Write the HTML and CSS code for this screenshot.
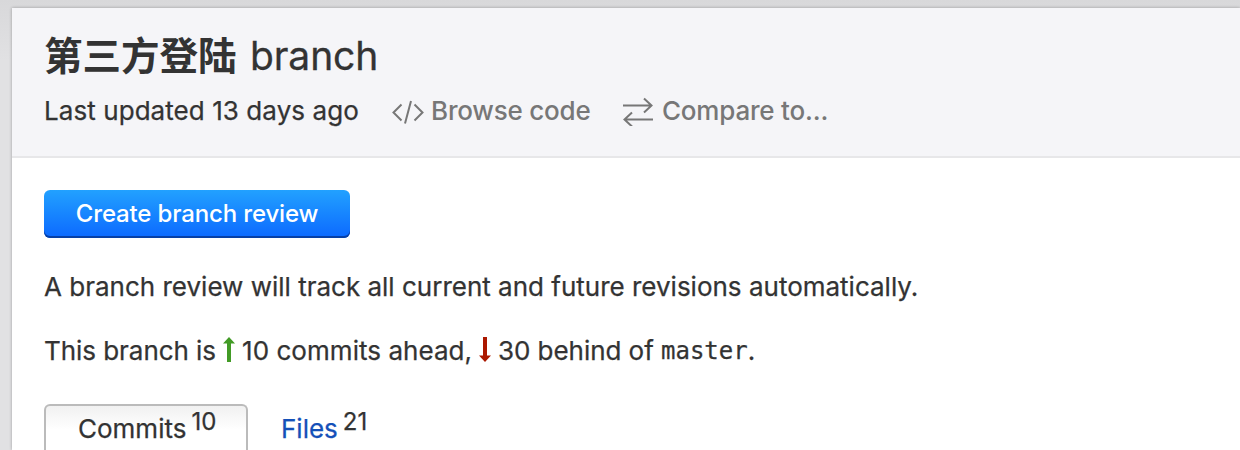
FILE: index.html
```html
<!DOCTYPE html>
<html lang="en">
<head>
<meta charset="utf-8">
<title>Branch</title>
<link rel="stylesheet" href="styles.css">
</head>
<body>
<main class="sheet">
  <header class="header">
    <h1 class="title"><span class="title-name">第三方登陆</span> <span class="title-kind">branch</span></h1>
    <div class="meta">
      <span class="updated">Last updated 13 days ago</span>
      <a class="action browse"><svg class="icon" width="32" height="26" viewBox="0 0 32 26"><path d="M9.500 6.500 1.500 14.500l8 8M22.500 6.500l8 8-8 8M19 3 13 25.500"/></svg><span>Browse code</span></a>
      <a class="action compare"><svg class="icon" width="32" height="30" viewBox="0 0 32 30"><path d="M0 9.500h28M21 2.500l7.500 7-7.500 7M30 23.500h-28M9 16.500l-7.500 7 7.500 7"/></svg><span>Compare to...</span></a>
    </div>
  </header>
  <section class="content">
    <button class="review">Create branch review</button>
    <p class="text intro">A branch review will track all current and future revisions automatically.</p>
    <p class="text status"><span class="s1">This branch is</span><svg class="arrow up" width="12" height="26" viewBox="0 0 12 26"><path d="M6 0l6 6.500H8V25H4V6.500H0z"/></svg><span class="s2">10 commits ahead,</span><svg class="arrow down" width="12" height="26" viewBox="0 0 12 26"><path d="M6 25l6-6.500H8V0H4v18.500H0z"/></svg><span class="s3">30 behind of</span><code>master</code><span>.</span></p>
    <nav class="tabs">
      <a class="tab active"><span class="label">Commits</span><span class="count">10</span></a>
      <a class="tab"><span class="label">Files</span><span class="count">21</span></a>
    </nav>
  </section>
</main>
</body>
</html>
```
FILE: styles.css
```css
* { box-sizing: border-box; }
body {
  margin: 0;
  height: 450px;
  overflow: hidden;
  padding: 8px 0 0 12px;
  background: linear-gradient(#d8d8da, #e1e1e3 60px);
  font: 26px/32px Inter, "Noto Sans CJK SC", sans-serif;
  color: #333;
}
.sheet {
  height: 442px;
  background: #fff;
  box-shadow: 0 0 3px rgba(0, 0, 0, .3);
}
.header {
  height: 150px;
  padding: 24px 0 0 32px;
  background: #f5f5f8;
  border-bottom: 2px solid #e7e7e9;
}
.title {
  display: flex;
  margin: 0;
  height: 48px;
  font-size: 39px;
  line-height: 48px;
  font-weight: 400;
}
.title-name {
  width: 206px;
  font-family: "Noto Sans CJK SC", sans-serif;
  font-size: 38.5px;
  font-weight: 700;
  line-height: 43px;
}
.title-kind { letter-spacing: -.1px; -webkit-text-stroke: .3px #333; }
.meta { display: flex; margin-top: 15px; height: 32px; align-items: center; white-space: nowrap; }
.updated { width: 348px; letter-spacing: .07px; }
.updated, .text, .tab { -webkit-text-stroke: .25px; }
.action { display: flex; align-items: center; color: #777; font-weight: 500; letter-spacing: -.2px; }
.browse { width: 231px; }
.action span { margin-left: 7px; }
.icon { fill: none; stroke: #777; stroke-width: 2; }
.content { padding: 32px 0 0 32px; }
.review {
  display: block;
  width: 306px;
  height: 48px;
  padding: 0;
  border: 0;
  border-radius: 6px;
  background: linear-gradient(#22a1ff, #0c69ff);
  box-shadow: inset 0 -2px #0740a6;
  color: #fff;
  font: 500 24px/46px Inter, sans-serif;
  letter-spacing: -.15px;
  white-space: nowrap;
}
.text { margin: 32px 0 0; height: 32px; white-space: nowrap; }
.intro { padding-top: 1px; }
.status { display: flex; align-items: center; }
.status span, code { padding-top: 2px; }
.s1 { width: 179px; letter-spacing: -.05px; }
.s2 { width: 237px; margin-left: 7px; letter-spacing: .05px; }
.s3 { width: 163px; margin-left: 7px; letter-spacing: -.05px; }
.up { fill: #429b26; }
.down { fill: #ab1800; }
code { font: 24px/32px "DejaVu Sans Mono", monospace; letter-spacing: 0; }
.tabs { display: flex; margin-top: 38px; height: 46px; }
.tab { display: flex; height: 46px; padding: 9px 0 0 33px; color: #1450b8; }
.active {
  width: 204px;
  padding: 7px 0 0 32px;
  border: 2px solid #bbb;
  border-bottom: 0;
  border-radius: 6px 6px 0 0;
  background: linear-gradient(#f1f1f1, #fff 24px);
  color: #333;
}
.count { margin: -7px 0 0 5px; font-size: 24px; color: #333; }
```
